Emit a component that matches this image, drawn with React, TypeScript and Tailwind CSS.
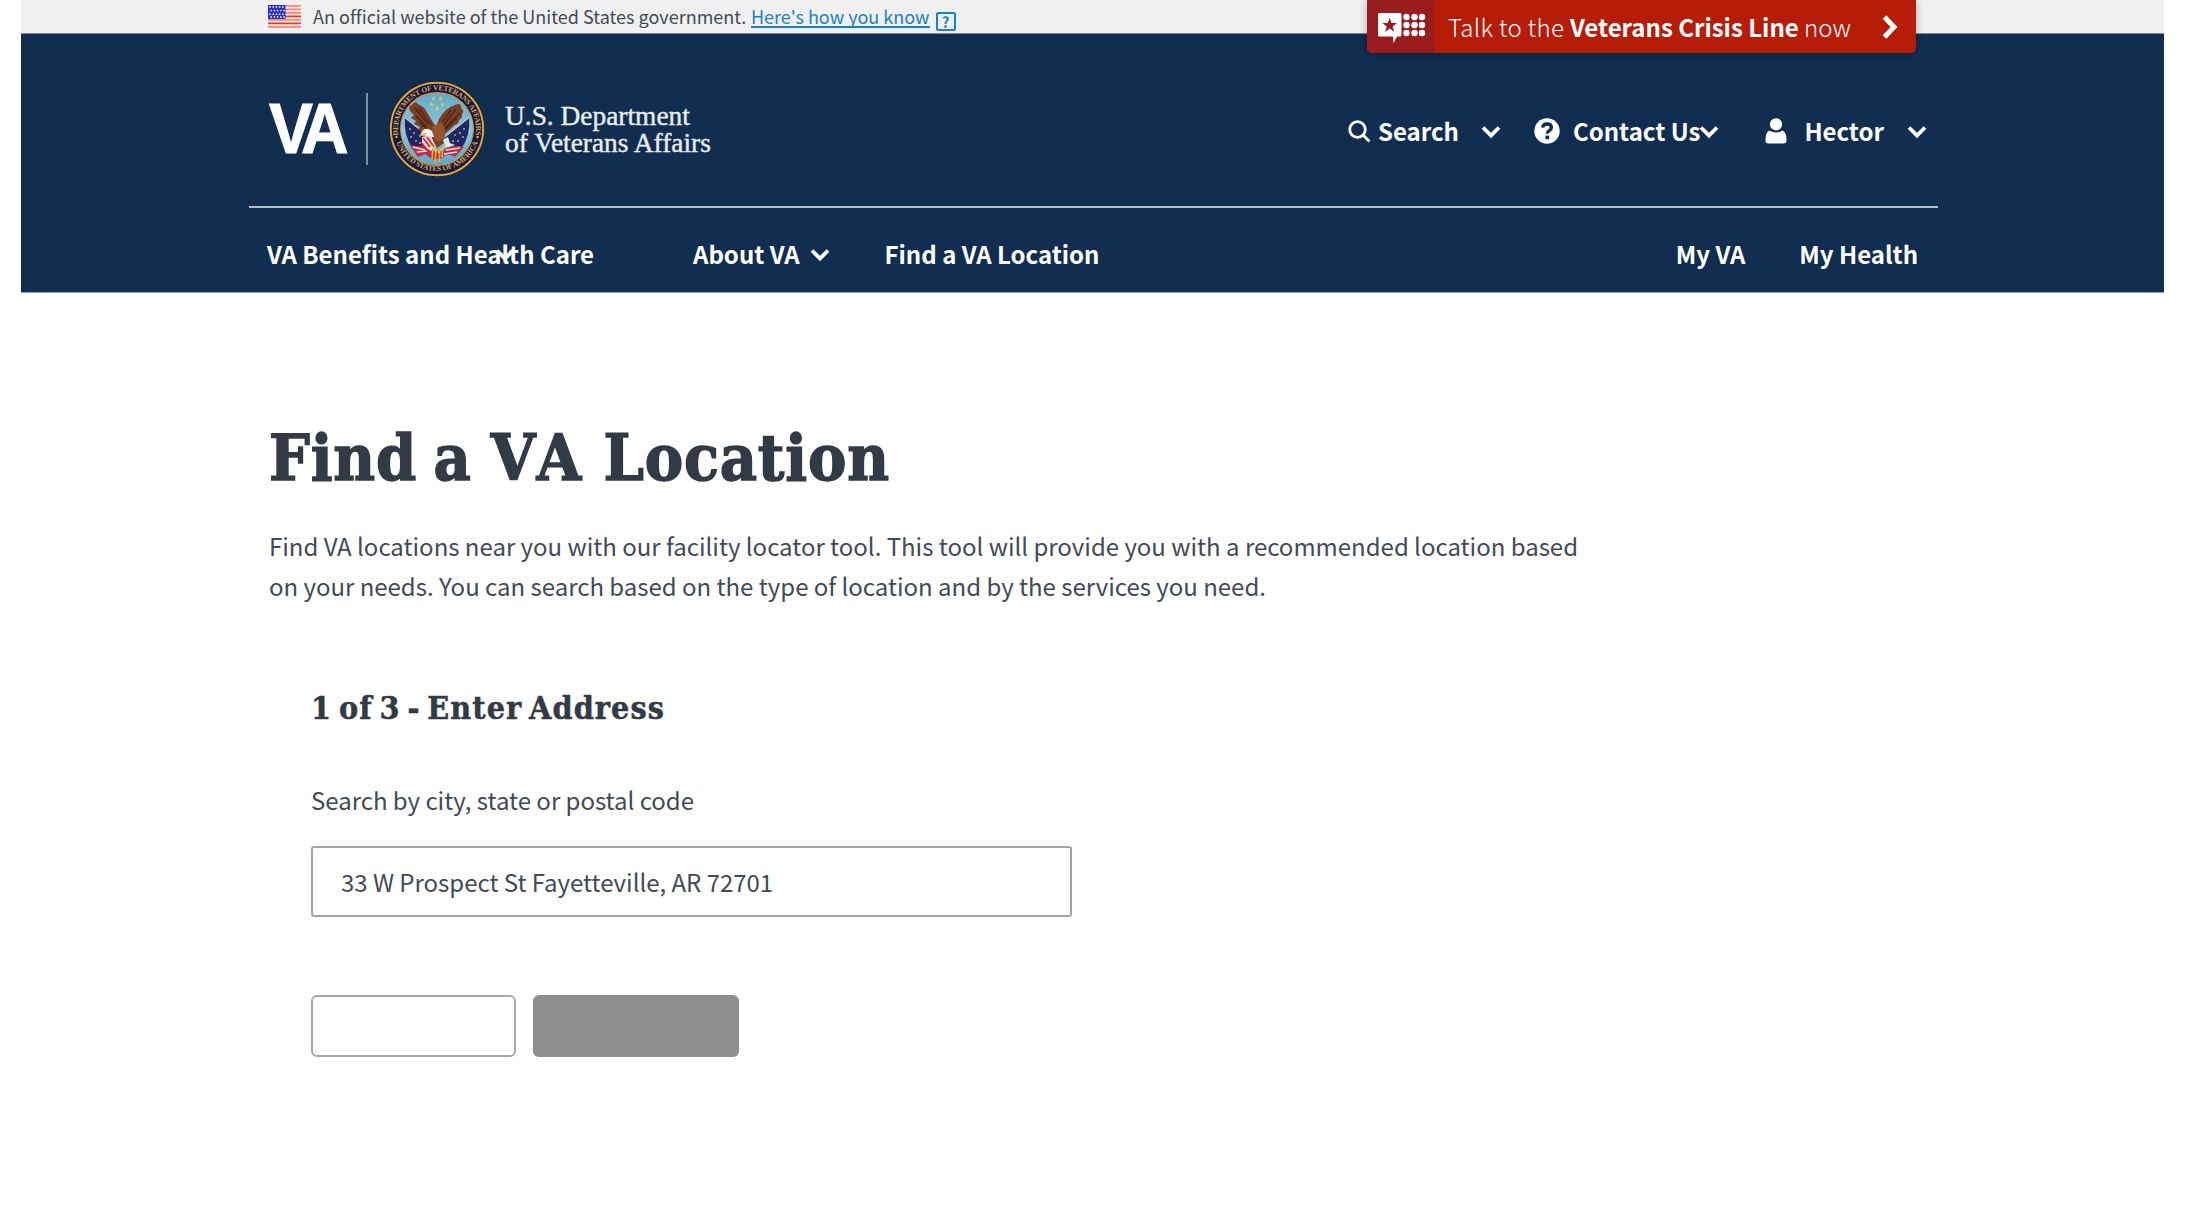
import type { ReactNode } from 'react';

function Chevron({ className = '' }: { className?: string }) {
  return (
    <svg viewBox="0 0 20 14" className={`h-[14px] w-5 ${className}`} fill="none" stroke="white" strokeWidth="3.8">
      <path d="M2 2.5 10 10.5 18 2.5" />
    </svg>
  );
}

function Flag() {
  return (
    <svg viewBox="0 0 33 23" className="h-[23px] w-[33px]">
      <rect width="33" height="23" fill="#fbeeec" />
      {[0, 3.5, 7, 10.5, 14, 17.5, 21].map((y, i) => (
        <rect key={y} y={y} width="33" height="1.8" fill={i === 5 || i === 3 ? '#f0361c' : '#f58a76'} />
      ))}
      <rect width="17.5" height="14" fill="#2b2fc4" />
      {[2, 5.6, 9.2, 12].map((y, r) =>
        [2.4, 5.6, 8.8, 12, 15.2].map((x) => (
          <circle key={`${x}-${y}`} cx={x + (r % 2 ? 0.8 : -0.4)} cy={y} r="0.9" fill="#dfe0fb" />
        )),
      )}
    </svg>
  );
}

function Star({ x, y, s, fill }: { x: number; y: number; s: number; fill: string }) {
  return (
    <path
      transform={`translate(${x} ${y}) scale(${s})`}
      d="M0-10 2.4-3.2 9.5-3.1 3.8 1.2 5.9 8.1 0 4-5.9 8.1-3.8 1.2-9.5-3.1-2.4-3.2Z"
      fill={fill}
    />
  );
}

function Seal() {
  return (
    <svg viewBox="0 0 96 96" className="h-24 w-24">
      <defs>
        <path id="ringTop" d="M9.6 55 A39 39 0 1 1 86.4 55" />
        <path id="ringBottom" d="M5.4 54 A43.2 43.2 0 0 0 90.6 54" />
        <linearGradient id="sky" x1="0" y1="0" x2="0" y2="1">
          <stop offset="0" stopColor="#62a9c9" />
          <stop offset="0.5" stopColor="#8cc6dc" />
          <stop offset="1" stopColor="#5ba6cb" />
        </linearGradient>
      </defs>
      <circle cx="48" cy="48" r="48" fill="#1a1638" />
      <circle cx="48" cy="48" r="46.2" fill="#1c1740" stroke="#dda83a" strokeWidth="2" />
      <circle cx="48" cy="48" r="36.4" fill="url(#sky)" stroke="#c99a3c" strokeWidth="1.1" />
      <text fill="#cfae5c" fontSize="7.4" fontWeight="700" fontFamily="Liberation Serif, serif">
        <textPath href="#ringTop" startOffset="50%" textAnchor="middle" textLength="134">
          DEPARTMENT OF VETERANS AFFAIRS
        </textPath>
      </text>
      <text fill="#cfae5c" fontSize="7.4" fontWeight="700" fontFamily="Liberation Serif, serif">
        <textPath href="#ringBottom" startOffset="50%" textAnchor="middle" textLength="106">
          UNITED STATES OF AMERICA
        </textPath>
      </text>
      <circle cx="7.4" cy="56" r="1.2" fill="#cfae5c" />
      <circle cx="88.6" cy="56" r="1.2" fill="#cfae5c" />
      {[[44.5, 17.5], [51.5, 17.5], [42.5, 23.5], [53.5, 23.5], [48, 27.5]].map(([x, y]) => (
        <Star key={`${x}`} x={x} y={y} s={0.25} fill="#e8d33f" />
      ))}
      <path d="M16 37 40 56 38 70 24 68Q14 54 16 37Z" fill="#20265e" />
      <path d="M80 37 56 56 58 70 72 68Q82 54 80 37Z" fill="#20265e" />
      <path d="M16 37 41 57M80 37 55 57" stroke="#e5dcc8" strokeWidth="0.8" />
      {[[21, 48], [25, 52], [22, 56], [27, 60], [31, 55], [31, 62], [75, 48], [71, 52], [74, 56], [69, 60], [66, 54], [64, 60]].map(([x, y]) => (
        <circle key={`${x}-${y}`} cx={x} cy={y} r="0.9" fill="#aeb6d4" />
      ))}
      <path d="M20 63Q30 67 37 64L42 70 54 70Q62 62 75 66L66 76Q58 71 53 77L44 79 36 73 29 76Z" fill="#c02b45" />
      <path d="M24 66 36 69M28 71 38 70M57 69 71 67M55 73 68 71" stroke="#f3dde0" strokeWidth="1.4" />
      <path d="M21 30Q19 24 23 24 26 19 29 23 35 25 39 33L47 46 50 38Q56 27 66 24 73 21 72 27 76 30 73 33 74 37 70 39 70 43 66 44L56 53 55 62 48 67 43 59 38 53 29 49 31 46 25 43 27 40 22 37 25 34Z" fill="#7a4023" />
      <path d="M26 27 39 43M30 27 42 44M27 35 38 46M30 41 39 49M67 28 55 44M71 32 56 47M68 37 56 49M62 29 53 42" stroke="#4c2413" strokeWidth="1.3" fill="none" />
      <path d="M43 46 53 41 56 50 54 59 48 61 44 54Z" fill="#92542d" />
      <path d="M34 49Q38 46 43 50L45 56 38 56 31 54Z" fill="#f4f1e8" />
      <path d="M31 53 38 52 35 56Z" fill="#e6b02c" />
      <path d="M33 56 42 55 47 66 42 70 33 64Z" fill="#f3dde0" />
      <path d="M34 57 41 66M38 56 45 66M32 61 38 69" stroke="#c8263c" strokeWidth="1.8" />
      <path d="M54 59 59 56 61 62 66 64 57 67Z" fill="#d9ecf4" />
      <path d="M44 66 43 79M47 68 46 82M51 67 50 81M54 66 53 76" stroke="#e3ac35" strokeWidth="1.7" />
      <path d="M40 62 48 71M57 63 49 72" stroke="#e9c75a" strokeWidth="1.5" />
    </svg>
  );
}

function CrisisIcon() {
  return (
    <svg viewBox="0 0 48 36" className="h-9 w-12" fill="white">
      <path d="M1.500 0h20.500a1.500 1.500 0 0 1 1.500 1.500v20.500a1.500 1.500 0 0 1-1.500 1.500h-3l-3.500 6.500-.5-6.500H1.500a1.500 1.500 0 0 1-1.500-1.500V1.500a1.500 1.500 0 0 1 1.500-1.500Z" />
      <Star x={11.7} y={12.5} s={0.78} fill="#981b1e" />
      {[4, 12, 20].map((y) => [28.5, 36.5, 44].map((x) => <circle key={`${x}-${y}`} cx={x} cy={y} r="3.2" />))}
    </svg>
  );
}

function NavLink({ children, className = '' }: { children: ReactNode; className?: string }) {
  return <a href="#" className={`relative block whitespace-nowrap ${className}`}>{children}</a>;
}

export default function App() {
  return (
    <div className="min-h-[1206px] bg-white font-['Noto_Sans_CJK_SC',sans-serif] text-[24px] text-[#424a56]">
      <div className="relative ml-[21px] w-[2143px]">
        <div className="flex h-[34px] items-start border-b border-[#7f8b98] bg-[#f0f0f0] pl-[247px] text-[18px] leading-[32px]">
          <span className="mt-[5px]"><Flag /></span>
          <span className="ml-[12px] w-[438px] whitespace-nowrap tracking-[0.02px]">An official website of the United States government.</span>
          <a href="#" className="mt-[4px] h-[24px] whitespace-nowrap border-b-2 border-[#1c82c6] leading-[24px] text-[#1c82c6]">Here's how you know</a>
          <span className="ml-[6px] mt-[12px] flex h-[19px] w-[20px] items-center justify-center rounded-[2px] border-2 border-[#1c82c6] text-[15px] font-bold leading-none text-[#1c82c6]">?</span>
        </div>

        <a href="#" className="absolute left-[1346px] top-0 flex h-[53px] w-[549px] items-center overflow-hidden rounded-b-[5px] bg-[#b51d09] font-light text-white shadow-[0_2px_8px_rgba(0,0,0,0.3)]">
          <span className="flex h-full w-[67px] items-start bg-[#981b1e] pl-[11px] pt-[13px]"><CrisisIcon /></span>
          <span className="ml-[14px] whitespace-nowrap leading-[55px]"><span className="tracking-[0.35px]">Talk to the </span><b className="font-bold">Veterans Crisis Line</b> now</span>
          <svg viewBox="0 0 16 24" className="ml-auto mr-[18px] h-6 w-4" fill="none" stroke="white" strokeWidth="5"><path d="M2.5 2 12 12 2.5 22" /></svg>
        </a>

        <header className="h-[259px] border-b border-[#8d9db1] bg-[#112e51] px-[228px] text-white">
          <div className="flex h-[174px] w-[1689px] items-start border-b-2 border-[#b4bfcb] pl-[20px]">
            <div className="mt-[47px] flex items-center">
              <div className="flex h-[96px] w-[97px] items-center">
                <span className="block origin-left scale-x-[0.94] font-['Liberation_Sans',sans-serif] text-[70px] font-bold leading-[96px] tracking-[-7.5px] [-webkit-text-stroke:1px_white]">VA</span>
              </div>
              <div className="h-[72px] w-[2px] bg-[#7f90a6]" />
              <div className="ml-[21px]"><Seal /></div>
              <div className="ml-[20px] mt-[1px] whitespace-nowrap font-['Liberation_Serif',serif] text-[27.4px] leading-[27px] text-[#e9edf2] [-webkit-text-stroke:0.4px_#e9edf2]">
                <div>U.S. Department</div>
                <div>of Veterans Affairs</div>
              </div>
            </div>
            <div className="ml-auto mr-[11px] mt-[79px] flex h-[36px] items-center font-bold leading-[36px]">
              <svg viewBox="0 0 23 23" className="h-[23px] w-[23px]" fill="none" stroke="white" strokeWidth="2.8"><circle cx="9.5" cy="9.5" r="7.8" /><path d="m15 15 6.5 6.5" /></svg>
              <span className="ml-[7px]">Search</span>
              <Chevron className="ml-[22px] mt-[2px]" />
              <svg viewBox="0 0 26 26" className="ml-[33px] h-[26px] w-[26px]">
                <circle cx="13" cy="13" r="12.7" fill="white" />
                <path d="M8.600 9.600c.4-2.400 2-3.600 4.500-3.600 2.600 0 4.300 1.400 4.300 3.500 0 3.400-4.200 3-4.200 6.200" fill="none" stroke="#112e51" strokeWidth="3.300" />
                <rect x="11.4" y="17.600" width="3.700" height="3.600" fill="#112e51" />
              </svg>
              <span className="ml-[13px]">Contact Us</span>
              <Chevron className="-ml-px mt-[2px]" />
              <svg viewBox="0 0 22 26" className="ml-[46px] h-[26px] w-[22px]" fill="white"><circle cx="11" cy="6.3" r="6.1" /><path d="M4.5 12.5Q11 16.5 17.5 12.5 21.5 14 21.5 22.500 21.500 25.500 18.500 25.500H3.500Q.5 25.500.5 22.500.5 14 4.500 12.500Z" /></svg>
              <span className="ml-[17px]">Hector</span>
              <Chevron className="ml-[23px] mt-[2px]" />
            </div>
          </div>
          <nav className="flex h-[84px] w-[1689px] items-center pl-[18px] pr-[20px] pt-[7px] font-bold leading-[36px]">
            <NavLink>VA Benefits and Health Care<Chevron className="absolute left-[228px] top-[12px]" /></NavLink>
            <NavLink className="ml-[99px]">About VA</NavLink>
            <Chevron className="ml-[10px] mt-[2px]" />
            <NavLink className="ml-[55px]">Find a VA Location</NavLink>
            <NavLink className="ml-auto">My VA</NavLink>
            <NavLink className="ml-[54px]">My Health</NavLink>
          </nav>
        </header>
      </div>

      <main className="pl-[269px] pt-[129px]">
        <h1 className="font-['DejaVu_Serif_Condensed','DejaVu_Serif',serif] text-[64px] font-bold leading-[72px] tracking-[0.8px] text-[#323a45] [-webkit-text-stroke:1.4px_#323a45] [word-spacing:-4.5px]">
          Find <span className="tracking-[2.2px]">a </span><span className="tracking-[6px]">VA</span> Location
        </h1>
        <p className="mt-[32px] w-[1330px] leading-[40px] tracking-[-0.012px]">
          Find VA locations near you with our facility locator tool. This tool will provide you with a recommended location based on your needs. You can search based on the type of location and by the services you need.
        </p>
        <form className="ml-[42px] mt-[82px]">
          <h2 className="font-['DejaVu_Serif_Condensed','DejaVu_Serif',serif] text-[32px] font-bold leading-[40px] tracking-[1.05px] text-[#323a45] [-webkit-text-stroke:0.5px_#323a45] [word-spacing:-4.2px]">1 of 3 - Enter Address</h2>
          <label htmlFor="address" className="mt-[52px] block leading-[40px] tracking-[-0.02px]">Search by city, state or postal code</label>
          <input id="address" readOnly value="33 W Prospect St Fayetteville, AR 72701" className="mt-[26px] block h-[71px] w-[761px] rounded-[3px] border-2 border-[#a3a3a3] bg-white pl-[28px] tracking-[-0.02px]" />
          <div className="mt-[78px] flex gap-[17px]">
            <button type="button" aria-label="Back" className="h-[62px] w-[205px] rounded-[6px] border-2 border-[#a8a8a8] bg-white" />
            <button type="button" aria-label="Next" className="h-[62px] w-[206px] rounded-[6px] bg-[#8e8e8e]" />
          </div>
        </form>
      </main>
    </div>
  );
}
